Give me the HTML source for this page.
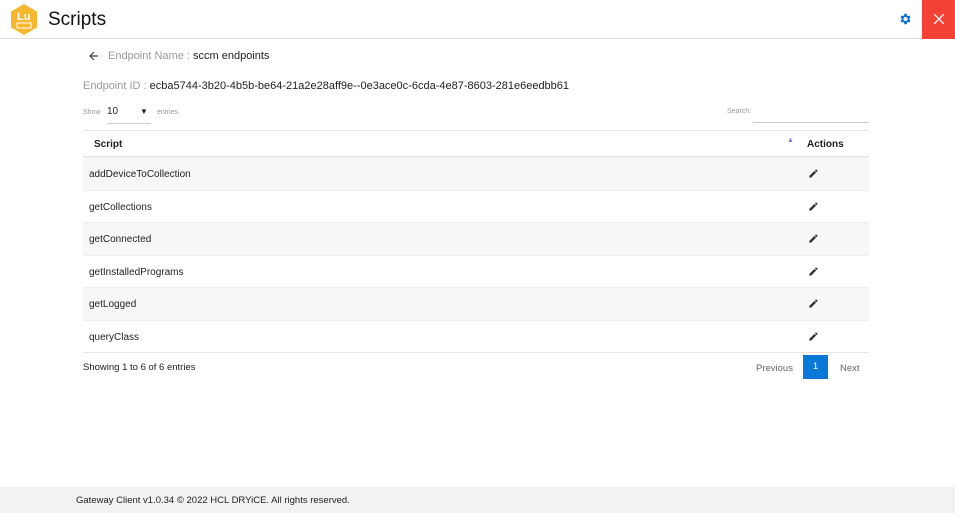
<!DOCTYPE html>
<html><head><style>
*{margin:0;padding:0;box-sizing:border-box}
body{width:955px;height:513px;position:relative;font-family:"Liberation Sans",sans-serif;background:#fff;color:#222;overflow:hidden}
.hdr{position:absolute;left:0;top:0;width:955px;height:39px;border-bottom:1px solid #e3e3e3}
.title{position:absolute;left:48px;top:9px;font-size:19px;color:#111}
.close{position:absolute;left:922px;top:0;width:33px;height:39px;background:#f44336}
.abs{position:absolute;white-space:nowrap}
.row{position:absolute;left:83px;width:786px;height:32.5px;font-size:10px;border-top:1px solid #eee}
.row span{position:absolute;left:6px;top:11px}
.row svg{position:absolute;left:725px;top:10px}
.odd{background:#f7f7f7}
.foot{position:absolute;left:0;top:487px;width:955px;height:26px;background:#f2f2f2;font-size:9.5px;padding:8px 0 0 76px}
</style></head><body>
<div class="hdr">
<svg class="abs" style="left:9px;top:3px" width="30" height="33" viewBox="0 0 30 33"><polygon points="15,1 28,8.5 28,24.5 15,32 2,24.5 2,8.5" fill="#f6b830"/><text x="8" y="17" font-size="11" font-weight="bold" fill="#fff" font-family="Liberation Sans">Lu</text><rect x="8" y="20" width="14" height="5" fill="none" stroke="#fff" stroke-width="1"/></svg>
<div class="title">Scripts</div>
<svg class="abs" style="left:898px;top:12px" width="14" height="14" viewBox="0 0 24 24"><path fill="#0a6fd3" d="M19.4 13a7.5 7.5 0 000-2l2.1-1.6-2-3.5-2.5 1a7.6 7.6 0 00-1.7-1L14.9 3h-4l-.4 2.9a7.6 7.6 0 00-1.7 1l-2.5-1-2 3.5L6.4 11a7.5 7.5 0 000 2l-2.1 1.6 2 3.5 2.5-1a7.6 7.6 0 001.7 1l.4 2.9h4l.4-2.9a7.6 7.6 0 001.7-1l2.5 1 2-3.5zM12.9 15.5a3.5 3.5 0 110-7 3.5 3.5 0 010 7z"/></svg>
<div class="close"><svg style="position:absolute;left:12px;top:14px" width="10" height="10"><path d="M0 0L10 10M10 0L0 10" stroke="#fff" stroke-width="1.3"/></svg></div>
</div>
<svg class="abs" style="left:89px;top:51px" width="10" height="10" viewBox="0 0 10 10"><path d="M9 5H1M5 1L1 5l4 4" stroke="#444" stroke-width="1.2" fill="none"/></svg>
<div class="abs" style="left:108px;top:50px;font-size:11px;color:#999">Endpoint Name : <span style="color:#222">sccm endpoints</span></div>
<div class="abs" style="left:83px;top:80px;font-size:11px;color:#999">Endpoint ID : <span style="color:#222">ecba5744-3b20-4b5b-be64-21a2e28aff9e--0e3ace0c-6cda-4e87-8603-281e6eedbb61</span></div>
<div class="abs" style="left:83px;top:109px;font-size:7px;color:#999">Show</div>
<div class="abs" style="left:107px;top:106px;font-size:10px">10</div>
<div class="abs" style="left:140px;top:107px;font-size:8px">&#9660;</div>
<div class="abs" style="left:107px;top:123px;width:44px;border-top:1px solid #ccc"></div>
<div class="abs" style="left:157px;top:109px;font-size:7px;color:#999">entries</div>
<div class="abs" style="left:727px;top:108px;font-size:7px;color:#999">Search:</div>
<div class="abs" style="left:753px;top:122px;width:116px;border-top:1px solid #ccc"></div>
<div class="abs" style="left:83px;top:130px;width:786px;height:27px;border-top:1px solid #e5e5e5;border-bottom:1px solid #e5e5e5;font-size:10px;font-weight:bold">
<span style="position:absolute;left:11px;top:8px">Script</span>
<span style="position:absolute;left:704px;top:6px;color:#7b7be0;font-size:7px;font-weight:normal">&#9650;</span>
<span style="position:absolute;left:724px;top:8px">Actions</span></div>
<div class="row odd" style="top:157px"><span>addDeviceToCollection</span><svg width="11" height="11" viewBox="0 0 24 24"><path fill="#333" d="M3 17.25V21h3.75L17.8 9.94l-3.75-3.75zM20.7 7.04a1 1 0 000-1.41l-2.34-2.34a1 1 0 00-1.41 0l-1.83 1.83 3.75 3.75z"/></svg></div>
<div class="row" style="top:189.5px"><span>getCollections</span><svg width="11" height="11" viewBox="0 0 24 24"><path fill="#333" d="M3 17.25V21h3.75L17.8 9.94l-3.75-3.75zM20.7 7.04a1 1 0 000-1.41l-2.34-2.34a1 1 0 00-1.41 0l-1.83 1.83 3.75 3.75z"/></svg></div>
<div class="row odd" style="top:222px"><span>getConnected</span><svg width="11" height="11" viewBox="0 0 24 24"><path fill="#333" d="M3 17.25V21h3.75L17.8 9.94l-3.75-3.75zM20.7 7.04a1 1 0 000-1.41l-2.34-2.34a1 1 0 00-1.41 0l-1.83 1.83 3.75 3.75z"/></svg></div>
<div class="row" style="top:254.5px"><span>getInstalledPrograms</span><svg width="11" height="11" viewBox="0 0 24 24"><path fill="#333" d="M3 17.25V21h3.75L17.8 9.94l-3.75-3.75zM20.7 7.04a1 1 0 000-1.41l-2.34-2.34a1 1 0 00-1.41 0l-1.83 1.83 3.75 3.75z"/></svg></div>
<div class="row odd" style="top:287px"><span>getLogged</span><svg width="11" height="11" viewBox="0 0 24 24"><path fill="#333" d="M3 17.25V21h3.75L17.8 9.94l-3.75-3.75zM20.7 7.04a1 1 0 000-1.41l-2.34-2.34a1 1 0 00-1.41 0l-1.83 1.83 3.75 3.75z"/></svg></div>
<div class="row" style="top:319.5px;border-bottom:1px solid #e5e5e5;height:33px"><span>queryClass</span><svg width="11" height="11" viewBox="0 0 24 24"><path fill="#333" d="M3 17.25V21h3.75L17.8 9.94l-3.75-3.75zM20.7 7.04a1 1 0 000-1.41l-2.34-2.34a1 1 0 00-1.41 0l-1.83 1.83 3.75 3.75z"/></svg></div>
<div class="abs" style="left:83px;top:362px;font-size:9.5px">Showing 1 to 6 of 6 entries</div>
<div class="abs" style="left:756px;top:363px;font-size:9.5px;color:#666">Previous</div>
<div class="abs" style="left:803px;top:355px;width:25px;height:24px;background:#0a78d7;color:#fff;font-size:9.5px;text-align:center;line-height:24px">1</div>
<div class="abs" style="left:840px;top:363px;font-size:9.5px;color:#666">Next</div>
<div class="foot">Gateway Client v1.0.34 © 2022 HCL DRYiCE. All rights reserved.</div>
</body></html>
